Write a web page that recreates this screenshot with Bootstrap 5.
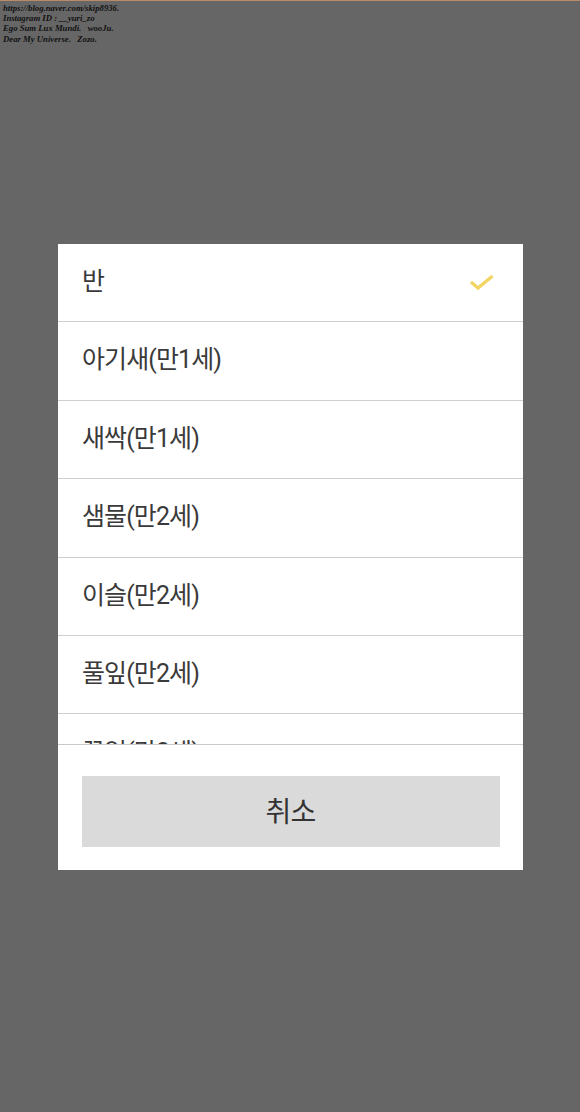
<!DOCTYPE html>
<html lang="ko">
<head>
<meta charset="utf-8">
<link href="https://cdn.jsdelivr.net/npm/bootstrap@5.3.0/dist/css/bootstrap.min.css" rel="stylesheet">
<style>
html,body{height:100%;}
body{background:#666;margin:0;font-family:Roboto,"Noto Sans CJK KR",sans-serif;color:#333;}
.stage{height:1112px;border-top:1px solid #b98a68;position:relative;overflow:hidden;}
.mark-text{position:absolute;left:3px;top:2px;font:italic bold 8.7px/10.2px "Liberation Serif",serif;color:#111;white-space:pre;margin:0;}
.sheet{width:465px;height:626px;margin-left:58px;background:#fff;}
.stage-inner{padding-top:243px;}
.pick-list{height:501px;flex:none;display:block;overflow:hidden;border-bottom:1px solid #c9c9c9;}
.pick-row{height:78.4px;padding:0 28px 2px 24px;border:0;border-bottom:1px solid #cfcfcf;border-radius:0;font-size:25px;letter-spacing:-.9px;color:#3a3a3a;background:#fff;}
.foot-area{padding:31px 23px 23px 24px;}
.cancel-btn{height:71px;width:100%;background:#dadada;border:0;border-radius:0;font-size:28px;letter-spacing:-.8px;color:#333;padding:2px 1px 0 0;}
.cancel-btn:hover{background:#dadada;color:#333;}
</style>
</head>
<body>
<div class="stage">
<p class="mark-text">https://blog.naver.com/skip8936.
Instagram ID : __yuri_zo
Ego Sum Lux Mundi.   wooJu.
Dear My Universe.   Zozo.</p>
<div class="stage-inner">
<div class="sheet d-flex flex-column">
<div class="pick-list list-group list-group-flush">
<div class="pick-row list-group-item d-flex align-items-center justify-content-between"><span>반</span>
<svg width="26" height="20" viewBox="0 0 26 20" fill="none"><path d="M2 10l7 6L23.500 4" stroke="#f2d564" stroke-width="3.400"/></svg></div>
<div class="pick-row list-group-item d-flex align-items-center">아기새(만1세)</div>
<div class="pick-row list-group-item d-flex align-items-center">새싹(만1세)</div>
<div class="pick-row list-group-item d-flex align-items-center">샘물(만2세)</div>
<div class="pick-row list-group-item d-flex align-items-center">이슬(만2세)</div>
<div class="pick-row list-group-item d-flex align-items-center">풀잎(만2세)</div>
<div class="pick-row list-group-item d-flex align-items-center">꽃잎(만3세)</div>
</div>
<div class="foot-area"><button type="button" class="cancel-btn btn">취소</button></div>
</div>
</div>
</div>
<script src="https://cdn.jsdelivr.net/npm/bootstrap@5.3.0/dist/js/bootstrap.bundle.min.js"></script>
</body>
</html>
